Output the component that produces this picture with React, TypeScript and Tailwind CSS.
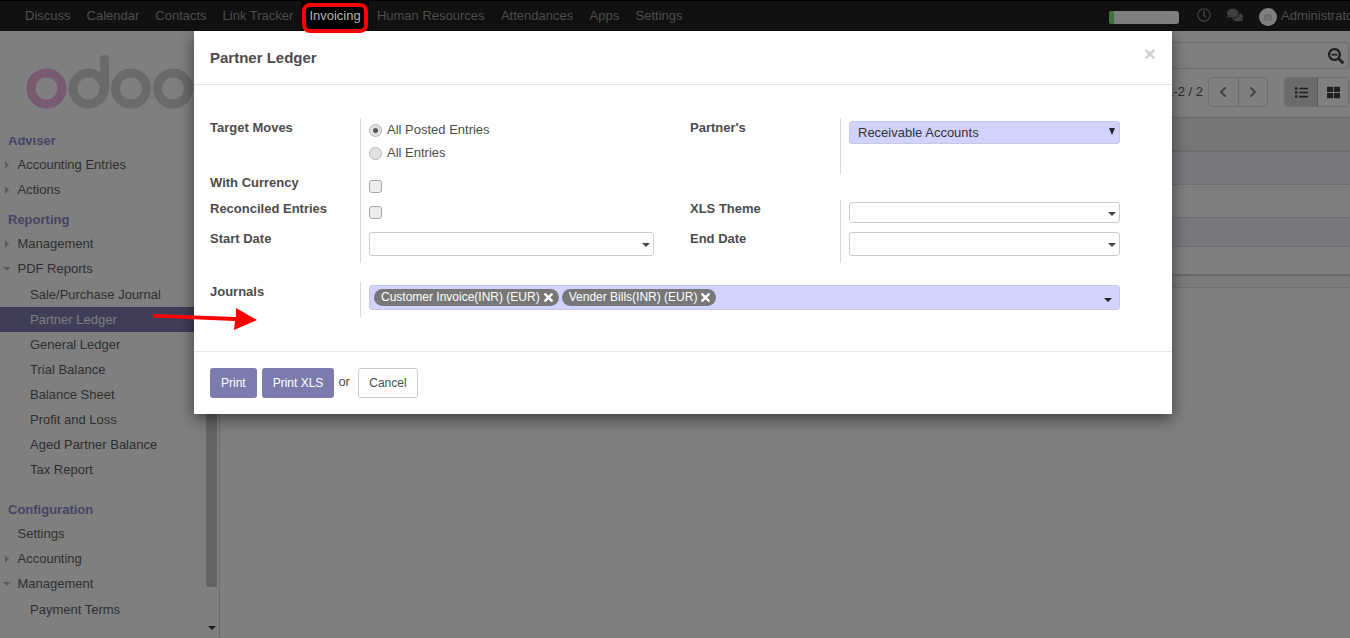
import { ChevronLeft, ChevronRight } from "lucide-react";
import { FaCamera, FaComments, FaList, FaRegClock, FaSearchMinus, FaThLarge, FaTimes } from "react-icons/fa";

const navItems = ["Discuss", "Calendar", "Contacts", "Link Tracker"];
const navItemsAfter = ["Human Resources", "Attendances", "Apps", "Settings"];

function Caret({ open }: { open?: boolean }) {
	return (
		<span className="flex w-[11px] shrink-0 justify-center">
			{open ? (
				<span className="border-x-[4px] border-t-[4px] border-x-transparent border-t-[#5c5c5c]" />
			) : (
				<span className="border-y-[4px] border-l-[4px] border-y-transparent border-l-[#5c5c5c]" />
			)}
		</span>
	);
}

function SideHead({ label, className }: { label: string; className?: string }) {
	return <div className={`pl-2 text-[13px] font-bold leading-[25px] text-[#474464] ${className ?? ""}`}>{label}</div>;
}

function SideItem({ label, caret, open }: { label: string; caret?: boolean; open?: boolean }) {
	return (
		<div className="flex h-[25px] items-center pl-[1px] text-[#2f2f2f]">
			{caret ? <Caret open={open} /> : <span className="w-[11px]" />}
			<span className="ml-[5.5px]">{label}</span>
		</div>
	);
}

function SubItem({ label, active }: { label: string; active?: boolean }) {
	return (
		<div className={`flex h-[25px] items-center pl-[30px] ${active ? "bg-[#403d59] text-[#7f7f7f]" : "text-[#2f2f2f]"}`}>
			{label}
		</div>
	);
}

function Sidebar() {
	return (
		<aside className="flex h-[607px] w-[220px] shrink-0 flex-col overflow-hidden border-r border-[#6b6b6b]">
			<div className="h-[106px] shrink-0 pl-[26px] pt-[20px]">
				<svg width="168" height="60" viewBox="0 0 168 60" fill="none" strokeWidth="9">
					<circle cx="20.5" cy="37.5" r="15.5" stroke="#785a72" />
					<circle cx="62.5" cy="37.5" r="15.5" stroke="#6a6a6a" />
					<path d="M78.5 37.5V8.5" stroke="#6a6a6a" strokeLinecap="round" />
					<circle cx="105" cy="37.5" r="15.5" stroke="#6a6a6a" />
					<circle cx="147" cy="37.5" r="15.5" stroke="#6a6a6a" />
				</svg>
			</div>
			<div className="relative min-h-0 flex-1 overflow-hidden">
				<div className="-mt-[9px]">
					<SideHead label="Adviser" />
					<div className="-mt-[1px]">
						<SideItem label="Accounting Entries" caret />
						<SideItem label="Actions" caret />
					</div>
					<SideHead label="Reporting" className="mt-[5px]" />
					<div className="-mt-[1px]">
						<SideItem label="Management" caret />
						<SideItem label="PDF Reports" caret open />
					</div>
					<div className="mt-[1px]">
						<SubItem label="Sale/Purchase Journal" />
						<SubItem label="Partner Ledger" active />
						<SubItem label="General Ledger" />
						<SubItem label="Trial Balance" />
						<SubItem label="Balance Sheet" />
						<SubItem label="Profit and Loss" />
						<SubItem label="Aged Partner Balance" />
						<SubItem label="Tax Report" />
					</div>
					<SideHead label="Configuration" className="mt-[15px]" />
					<div className="-mt-[1px]">
						<SideItem label="Settings" />
						<SideItem label="Accounting" caret />
						<SideItem label="Management" caret open />
					</div>
					<div className="mt-[1px]">
						<SubItem label="Payment Terms" />
					</div>
				</div>
				{/* scrollbar */}
				<div className="absolute bottom-0 right-[1px] top-0 w-[13px]">
					<div className="absolute left-[1px] right-[1px] top-[270px] h-[180px] bg-[#646464]" />
					<span className="absolute bottom-[8px] left-[3px] border-x-[4px] border-t-[4px] border-x-transparent border-t-[#1e1e1e]" />
				</div>
			</div>
		</aside>
	);
}

function MainBackdrop() {
	return (
		<main className="flex min-w-0 flex-1 flex-col">
			<div className="h-[87px] shrink-0 border-b border-[#6a6a6a] pr-[1px] pt-[11px]">
				<div className="flex h-[27px] items-center justify-end rounded-[3px] border border-[#6e6e6e] pr-[4px]">
					<FaSearchMinus className="text-[16px] text-[#1f1f1f]" />
				</div>
				<div className="mt-[8px] flex items-center justify-end text-[#2c2c2c]">
					<span>1-2 / 2</span>
					<div className="ml-[5px] flex h-[30px] w-[60px] rounded-[3px] border border-[#6e6e6e] text-[#444]">
						<span className="flex flex-1 items-center justify-center border-r border-[#6e6e6e]">
							<ChevronLeft size={16} strokeWidth={3} />
						</span>
						<span className="flex flex-1 items-center justify-center">
							<ChevronRight size={16} strokeWidth={3} />
						</span>
					</div>
					<div className="ml-4 flex h-[30px] w-[65px] rounded-[3px] border border-[#6e6e6e] text-[#1f1f1f]">
						<span className="flex w-[33px] items-center justify-center border-r border-[#5c5c5c] bg-[#6b6b6b]">
							<FaList className="text-[13px]" />
						</span>
						<span className="flex flex-1 items-center justify-center">
							<FaThLarge className="text-[13px]" />
						</span>
					</div>
				</div>
			</div>
			<div className="h-[34px] shrink-0 border-b-2 border-[#6c6c6c] bg-[#777]" />
			<div className="h-[33px] shrink-0 border-b border-[#6f6f6f] bg-[#78787f]" />
			<div className="h-[33px] shrink-0 border-b border-[#6f6f6f] bg-[#7f7f7f]" />
			<div className="h-[29px] shrink-0 border-b border-[#6f6f6f] bg-[#78787f]" />
			<div className="h-[29px] shrink-0 border-b-2 border-[#6a6a6a] bg-[#7f7f7f]" />
			<div className="h-[12px] shrink-0 border-b border-[#6f6f6f] bg-[#7b7b7b]" />
		</main>
	);
}

function Label({ children, className }: { children: string; className?: string }) {
	return <label className={`block font-bold leading-[18px] text-[#4c4c4c] ${className ?? ""}`}>{children}</label>;
}

function Radio({ checked, label }: { checked?: boolean; label: string }) {
	return (
		<div className="flex h-[23px] items-center">
			<span className="mt-[2px] flex size-[13px] items-center justify-center rounded-full border border-[#b4b4b4] bg-[#e2e2e2]">
				{checked && <span className="size-[5px] rounded-full bg-[#555]" />}
			</span>
			<span className="ml-[5px] text-[#4c4c4c]">{label}</span>
		</div>
	);
}

function Checkbox() {
	return <span className="block size-[13px] rounded-[3px] border border-[#a8a8a8] bg-[#ededed]" />;
}

function SelectBox({ heightClass }: { heightClass: string }) {
	return (
		<div className={`relative w-full rounded-[3px] border border-[#ccc] bg-white ${heightClass}`}>
			<span className="absolute right-[3px] top-1/2 -translate-y-[1px] border-x-[4px] border-t-[4px] border-x-transparent border-t-[#444]" />
		</div>
	);
}

function Tag({ label }: { label: string }) {
	return (
		<span className="flex h-[17px] items-center gap-[2px] rounded-full bg-[#777] pl-[7px] pr-[4px] text-[12px] text-white">
			{label}
			<FaTimes className="text-[13px]" />
		</span>
	);
}

function PartnerLedgerDialog() {
	return (
		<div className="absolute left-[194px] top-[31px] flex h-[383px] w-[978px] flex-col bg-white text-[13px] shadow-[0_5px_15px_rgba(0,0,0,0.5)]">
			<div className="relative flex h-[54px] shrink-0 items-center border-b border-[#e5e5e5] pt-[1px] pl-4">
				<h4 className="text-[15px] font-bold text-[#4c4c4c]">Partner Ledger</h4>
				<span className="absolute right-[16px] top-[12px] text-[21px] font-bold leading-[21px] text-[#cfcfcf]">×</span>
			</div>

			<div className="h-[266px] shrink-0 pl-4 pt-[33px]">
				<div className="grid grid-cols-[150px_330px_150px_280px]">
					<Label className="pt-[1px]">Target Moves</Label>
					<div className="h-[56px] border-l border-[#d9d9d9] pl-2">
						<Radio checked label="All Posted Entries" />
						<Radio label="All Entries" />
					</div>
					<Label className="pt-[1px]">Partner's</Label>
					<div className="h-[56px] border-l border-[#d9d9d9] pl-2 pt-[3px]">
						<div className="relative flex h-[23px] items-center rounded-[3px] border border-[#c7c7e0] bg-[#d2d2ff] pl-2 text-[#333]">
							Receivable Accounts
							<span className="absolute right-[4px] top-[6px] border-x-[3.5px] border-t-[7px] border-x-transparent border-t-[#222]" />
						</div>
					</div>

					<Label>With Currency</Label>
					<div className="h-[26px] border-l border-[#d9d9d9] pl-2 pt-[6px]">
						<Checkbox />
					</div>
					<div className="col-span-2" />

					<Label>Reconciled Entries</Label>
					<div className="h-[26px] border-l border-[#d9d9d9] pl-2 pt-[6px]">
						<Checkbox />
					</div>
					<Label>XLS Theme</Label>
					<div className="h-[26px] border-l border-[#d9d9d9] pl-2 pt-[2px]">
						<SelectBox heightClass="h-[21px]" />
					</div>

					<Label className="pt-[4px]">Start Date</Label>
					<div className="h-[37px] border-l border-[#d9d9d9] pl-2 pt-[6px]">
						<div className="w-[285px]">
							<SelectBox heightClass="h-[24px]" />
						</div>
					</div>
					<Label className="pt-[4px]">End Date</Label>
					<div className="h-[37px] border-l border-[#d9d9d9] pl-2 pt-[6px]">
						<SelectBox heightClass="h-[24px]" />
					</div>
				</div>

				<div className="mt-[19px] flex">
					<div className="w-[150px]">
						<Label className="pt-[1px]">Journals</Label>
					</div>
					<div className="h-[35px] w-[760px] border-l border-[#d9d9d9] pl-2 pt-[3px]">
						<div className="relative flex h-[25px] items-center gap-[3px] rounded-[3px] border border-[#c7c7e0] bg-[#d2d2ff] pb-[1px] pl-[4px]">
							<Tag label="Customer Invoice(INR) (EUR)" />
							<Tag label="Vender Bills(INR) (EUR)" />
							<span className="absolute right-[7px] top-[12px] border-x-[4px] border-t-[4px] border-x-transparent border-t-[#222]" />
						</div>
					</div>
				</div>
			</div>

			<div className="flex flex-1 items-start border-t border-[#e5e5e5] pl-4 pt-4 text-[12px]">
				<button className="h-[30px] rounded-[3px] bg-[#7c7bad] px-[11px] text-white">Print</button>
				<button className="ml-[5px] h-[30px] rounded-[3px] bg-[#7c7bad] px-[11px] text-white">Print XLS</button>
				<span className="ml-[4px] mt-[4px] text-[13px] text-[#4c4c4c]">or</span>
				<button className="ml-[8px] h-[30px] w-[60px] rounded-[3px] border border-[#ccc] bg-white text-[#4c4c4c]">Cancel</button>
			</div>
		</div>
	);
}

export default function App() {
	return (
		<div className="relative h-[638px] w-[1350px] overflow-hidden bg-[#7f7f7f] font-['Liberation_Sans',Arial,sans-serif] text-[13px]">
			<header className="relative flex h-[31px] items-center border-t border-black bg-[#111] pl-[17px]">
				{navItems.map((item) => (
					<span key={item} className="px-[8px] text-[#4f4f4f]">
						{item}
					</span>
				))}
				<span className="flex h-[30px] items-center bg-black px-[8px] text-[#b8b8b8]">Invoicing</span>
				{navItemsAfter.map((item) => (
					<span key={item} className="px-[8.2px] text-[#4f4f4f]">
						{item}
					</span>
				))}
				<div className="absolute right-0 top-0 flex h-[30px] w-[242px] items-center overflow-hidden">
					<div className="ml-[1px] mt-[3px] flex h-[13px] w-[70px] shrink-0 overflow-hidden rounded-[3px] bg-[#7f7f7f]">
						<span className="w-[5px] bg-[#3c763d]" />
					</div>
					<FaRegClock className="mb-[3px] ml-[18px] shrink-0 text-[14px] text-[#3f3f3f]" />
					<FaComments className="mb-[2px] ml-[16px] shrink-0 text-[16px] text-[#3f3f3f]" />
					<span className="ml-[16px] mt-[2px] flex size-[18px] shrink-0 items-center justify-center rounded-full bg-[#7f7f7f]">
						<FaCamera className="text-[8px] text-[#6f6f6f]" />
					</span>
					<span className="ml-[4px] whitespace-nowrap text-[#4f4f4f]">Administrator</span>
				</div>
			</header>

			<div className="flex h-[607px]">
				<Sidebar />
				<MainBackdrop />
			</div>

			<PartnerLedgerDialog />

			{/* annotations drawn on the screenshot */}
			<div className="absolute left-[302px] top-[3px] h-[30px] w-[66px] rounded-[8px] border-4 border-[#f00]" />
			<svg className="absolute left-[150px] top-[305px]" width="112" height="30" viewBox="0 0 112 30">
				<path d="M3 9 L86 12 L86 3 L107 15 L84 25 L85 16 L3 12.5 Z" fill="#f00" />
			</svg>
		</div>
	);
}
